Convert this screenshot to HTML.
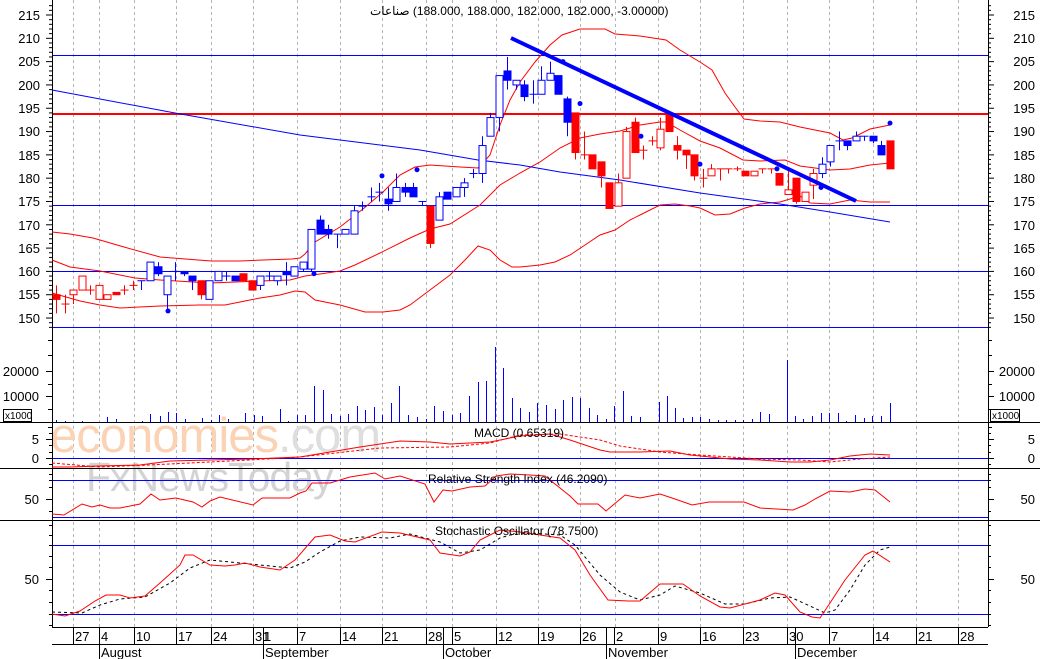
<!DOCTYPE html>
<html><head><meta charset="utf-8"><style>
html,body{margin:0;padding:0;background:#fff;}
svg{display:block;font-family:"Liberation Sans","Noto Sans CJK SC",sans-serif;}
</style></head><body>
<svg id="s" width="1040" height="659" viewBox="0 0 1040 659" xmlns="http://www.w3.org/2000/svg">
<rect width="1040" height="659" fill="#fff"/>
<g id="grid" stroke="#b4b4b4" stroke-dasharray="3,3" stroke-width="1"></g>
<!-- watermark -->
<text x="50" y="452" font-size="49" fill="#fbd3b4" letter-spacing="-1">economies<tspan fill="#dedede">.com</tspan></text>
<text x="86" y="491" font-size="41" fill="#cccccc" opacity="0.85" letter-spacing="-1">FxNewsToday</text>
<!-- horizontal lines price -->
<g stroke-width="1">
<line x1="52" y1="55.5" x2="988" y2="55.5" stroke="#00f"/>
<line x1="52" y1="205.5" x2="988" y2="205.5" stroke="#00f"/>
<line x1="52" y1="271.5" x2="988" y2="271.5" stroke="#00f"/>
<line x1="52" y1="327.5" x2="988" y2="327.5" stroke="#00f"/>
<line x1="52" y1="114" x2="988" y2="114" stroke="#f00" stroke-width="2"/>
<line x1="52" y1="458.5" x2="988" y2="458.5" stroke="#00f"/>
<line x1="52" y1="480.5" x2="988" y2="480.5" stroke="#00f"/>
<line x1="52" y1="517.5" x2="988" y2="517.5" stroke="#00f"/>
<line x1="52" y1="545.5" x2="988" y2="545.5" stroke="#00f"/>
<line x1="52" y1="614.5" x2="988" y2="614.5" stroke="#00f"/>
<line x1="0" y1="422.5" x2="1040" y2="422.5" stroke="#000"/>
<line x1="0" y1="468.5" x2="1040" y2="468.5" stroke="#000"/>
<line x1="0" y1="520.5" x2="1040" y2="520.5" stroke="#000"/>
<line x1="52.5" y1="0" x2="52.5" y2="627" stroke="#000"/>
<line x1="988.5" y1="0" x2="988.5" y2="627" stroke="#000"/>
<line x1="52" y1="627.5" x2="988" y2="627.5" stroke="#000"/>
<line x1="52" y1="644.5" x2="988" y2="644.5" stroke="#000"/>
</g>
<g id="ticks" stroke="#000" stroke-width="1"></g>
<g id="draw"></g>
<!-- titles -->
<text x="370" y="15" font-size="12" fill="#000" direction="ltr">&#x200E;صناعات&#x200E; (188.000, 188.000, 182.000, 182.000, -3.00000)</text>
<text x="474" y="437" font-size="12" fill="#000">MACD (0.65319)</text>
<text x="428" y="483" font-size="12" fill="#000">Relative Strength Index (46.2090)</text>
<text x="435" y="535" font-size="12" fill="#000">Stochastic Oscillator (78.7500)</text>
<!-- left axis labels -->
<g font-size="13" fill="#000" text-anchor="end">
<text x="40" y="20">215</text><text x="40" y="43">210</text><text x="40" y="66">205</text><text x="40" y="90">200</text><text x="40" y="113">195</text><text x="40" y="136">190</text><text x="40" y="160">185</text><text x="40" y="183">180</text><text x="40" y="206">175</text><text x="40" y="230">170</text><text x="40" y="253">165</text><text x="40" y="276">160</text><text x="40" y="299">155</text><text x="40" y="323">150</text>
<text x="39" y="376">20000</text><text x="39" y="401">10000</text>
<text x="39" y="444">5</text><text x="39" y="463">0</text>
<text x="39" y="504">50</text><text x="39" y="584">50</text>
</g>
<g font-size="13" fill="#000" text-anchor="end">
<text x="1035" y="20">215</text><text x="1035" y="43">210</text><text x="1035" y="66">205</text><text x="1035" y="90">200</text><text x="1035" y="113">195</text><text x="1035" y="136">190</text><text x="1035" y="160">185</text><text x="1035" y="183">180</text><text x="1035" y="206">175</text><text x="1035" y="230">170</text><text x="1035" y="253">165</text><text x="1035" y="276">160</text><text x="1035" y="299">155</text><text x="1035" y="323">150</text>
<text x="1035" y="376">20000</text><text x="1035" y="401">10000</text>
<text x="1035" y="444">5</text><text x="1035" y="463">0</text>
<text x="1035" y="504">50</text><text x="1035" y="584">50</text>
</g>
<rect x="3.5" y="409.5" width="28" height="12" fill="none" stroke="#000"/>
<text x="5" y="419" font-size="10">x1000</text>
<rect x="990.5" y="409.5" width="29" height="12" fill="none" stroke="#000"/>
<text x="992" y="419" font-size="10">x1000</text>
<!-- dates -->
<g font-size="13" fill="#000">
<text x="75" y="641">27</text><text x="101" y="641">4</text><text x="136" y="641">10</text><text x="178" y="641">17</text><text x="213" y="641">24</text><text x="255" y="641">31</text><text x="264" y="641">1</text><text x="299" y="641">7</text><text x="342" y="641">14</text><text x="384" y="641">21</text><text x="428" y="641">28</text><text x="454" y="641">5</text><text x="498" y="641">12</text><text x="540" y="641">19</text><text x="582" y="641">26</text><text x="616" y="641">2</text><text x="660" y="641">9</text><text x="702" y="641">16</text><text x="745" y="641">23</text><text x="789" y="641">30</text><text x="831" y="641">7</text><text x="875" y="641">14</text><text x="918" y="641">21</text><text x="960" y="641">28</text>
<text x="101" y="657">August</text><text x="265" y="657">September</text><text x="445" y="657">October</text><text x="608" y="657">November</text><text x="797" y="657">December</text>
</g>
<g stroke="#000" stroke-width="1">
<line x1="73.5" y1="627" x2="73.5" y2="644"/><line x1="99.5" y1="627" x2="99.5" y2="659"/><line x1="134.5" y1="627" x2="134.5" y2="644"/><line x1="176.5" y1="627" x2="176.5" y2="644"/><line x1="211.5" y1="627" x2="211.5" y2="644"/><line x1="253.5" y1="627" x2="253.5" y2="644"/><line x1="263.5" y1="627" x2="263.5" y2="659"/><line x1="297.5" y1="627" x2="297.5" y2="644"/><line x1="340.5" y1="627" x2="340.5" y2="644"/><line x1="382.5" y1="627" x2="382.5" y2="644"/><line x1="426.5" y1="627" x2="426.5" y2="644"/><line x1="443.5" y1="627" x2="443.5" y2="659"/><line x1="452.5" y1="627" x2="452.5" y2="644"/><line x1="496.5" y1="627" x2="496.5" y2="644"/><line x1="538.5" y1="627" x2="538.5" y2="644"/><line x1="580.5" y1="627" x2="580.5" y2="644"/><line x1="606.5" y1="627" x2="606.5" y2="659"/><line x1="614.5" y1="627" x2="614.5" y2="644"/><line x1="658.5" y1="627" x2="658.5" y2="644"/><line x1="700.5" y1="627" x2="700.5" y2="644"/><line x1="743.5" y1="627" x2="743.5" y2="644"/><line x1="787.5" y1="627" x2="787.5" y2="644"/><line x1="795.5" y1="627" x2="795.5" y2="659"/><line x1="829.5" y1="627" x2="829.5" y2="644"/><line x1="873.5" y1="627" x2="873.5" y2="644"/><line x1="916.5" y1="627" x2="916.5" y2="644"/><line x1="958.5" y1="627" x2="958.5" y2="644"/>
</g>
</svg>
<script>
var NS="http://www.w3.org/2000/svg";
function el(p,t,a){var e=document.createElementNS(NS,t);for(var k in a)e.setAttribute(k,a[k]);p.appendChild(e);return e;}
var g=document.getElementById('grid'),d=document.getElementById('draw'),tk=document.getElementById('ticks');
[73,99,134,176,211,253,297,340,382,426,452,496,538,580,615,658,700,743,787,829,873,916,958].forEach(function(x){el(g,'line',{x1:x+.5,y1:0,x2:x+.5,y2:627});});
for(var p=148;p<=217;p++){var y=15+(215-p)*4.662;var L=(p%5==0)?6:3;el(tk,'line',{x1:52-L,y1:y,x2:52,y2:y});el(tk,'line',{x1:988,y1:y,x2:988+L,y2:y});}
[[340,4],[355,4],[371,6],[384,4],[396,6],[409,4],[427,4],[433,3],[439,6],[445,3],[452,3],[458,6],[464,3],[474,3],[480,3],[487,3],[499,6],[511,3],[525,3],[535,3],[545,3],[556,3],[567,3],[579,6],[590,3],[602,3],[614,3],[625,3]].forEach(function(a){el(tk,'line',{x1:52-a[1],y1:a[0]+.5,x2:52,y2:a[0]+.5});el(tk,'line',{x1:988,y1:a[0]+.5,x2:988+a[1],y2:a[0]+.5});});
function Y(p){return 15+(215-p)*4.662;}
function pl(pts,c,w,da){var s=pts.map(function(q){return q[0]+','+q[1];}).join(' ');var a={points:s,fill:'none',stroke:c,'stroke-width':w||1};if(da)a['stroke-dasharray']=da;el(d,'polyline',a);}
pl([[52,232],[70,234],[93,238],[124,247],[160,257],[211,261],[240,261],[263,260],[292,259],[300,258],[305,254],[315,242],[340,227],[363,209],[383,192],[400,175],[415,167],[430,165],[460,167],[478,168],[490,155],[500,125],[510,100],[520,82],[535,62],[550,45],[562,35],[580,29],[605,29],[615,34],[640,36],[666,40],[680,50],[700,62],[712,70],[725,93],[735,107],[744,119],[760,121],[780,122],[800,127],[830,133],[843,140],[852,138],[870,129],[890,125]],'#f00');
pl([[52,260],[70,267],[100,271],[135,278],[160,280],[210,283],[260,281],[290,280],[305,276],[320,274],[340,271],[355,265],[380,253],[410,238],[430,229],[450,224],[480,205],[500,185],[520,173],[540,162],[560,148],[580,138],[600,134],[620,131],[640,125],[660,122],[666,122],[680,130],[700,141],[720,148],[743,160],[760,161],[785,160],[800,166],[830,170],[850,169],[870,165],[890,163]],'#f00');
pl([[52,293],[80,301],[100,305],[120,308],[160,306],[200,305],[225,305],[245,301],[260,298],[280,295],[295,291],[305,292],[315,300],[340,305],[365,312],[383,312],[400,310],[410,305],[430,290],[450,275],[465,260],[478,246],[490,250],[500,260],[512,267],[520,267],[540,265],[555,262],[570,255],[585,245],[600,235],[615,230],[630,220],[640,215],[660,205],[675,204],[690,206],[700,208],[715,215],[730,214],[745,208],[760,204],[780,202],[790,199],[800,196],[810,203],[830,204],[850,200],[870,202],[890,202]],'#f00');
pl([[52,90],[175,113],[300,135],[420,150],[478,160],[520,165],[560,172],[620,180],[700,193],[780,204],[830,212],[890,222]],'#00f');
var C=[['r',154,157,151,155,1],['r',153,155,151,153,0],['r',156,156,153,155,2],['r',156,159,156,159,2],['r',156,157,155,156,0],['r',157,157,154,154,2],['r',154,155,154,155,2],['r',155.5,155.5,155,155,1],['r',156,157,155,156,0],['r',157,158,156,157,0],
['b',158,158,156,158,0],['b',158,162,158,162,2],['b',161,162,159,159.5,1],['b',155,159,152,159,2],['b',160,162,158,160,0],['b',160,160,159,159.5,1],['b',159,159,156,158,1],['r',158,158,154,155,1],['b',154,158,154,158,2],['b',158,160,158,160,2],
['b',159,160,158,159,0],['b',159,159,158,158,1],['r',159.5,159.5,158,158,1],['r',158,158,156,156,1],['b',157,159,156,159,2],['b',159,160,158,159,0],['b',158,159,157,159,2],['b',160,162,157,159.3,1],['b',159,161,159,161,2],['b',160.5,162,160,162,2],
['b',160.5,169,160,169,2],['b',171,172,168,168,1],['b',169,170,167,168,1],['b',168,168,165,168,0],['b',168,169,168,169,2],['b',168,174,168,173,2],['b',174,175,173,174,0],['b',176,178,175,176,0],['b',177,179,175,177,0],['b',175.5,178,173,174.5,1],
['b',175,181,175,178,2],['b',178,179,176,177,1],['b',178,179,176,176,1],['b',175,175,174,175,0],['r',174,174,165,166,1],['b',171,177,171,176,2],['b',177,177,175.5,175.5,1],['b',176,178,176,178,2],['b',178,180,176,179,2],['b',181,182,180,181,0],
['b',181,189,179,187,2],['b',189,194,189,193,2],['b',193,202,190,202,2],['b',203,206,199,201,1],['b',200,201,199,201,2],['b',200,201,196.5,197.5,1],['b',198,201,196,198,0],['b',198,204,198,201,2],['b',201,205,201,202.5,2],['b',202,202,198,198,1],
['b',197,197.5,189,192,1],['r',194,194,184,185.5,1],['r',185,190,184,185,0],['r',185,185,182,182,1],['r',183.5,183.5,178,180.5,1],['r',179,179,173.5,173.5,1],['r',174,181,174,179,2],['r',180,191,180,190,2],['r',192,193,185.5,185.5,1],['r',186,187,184,186,0],
['r',188,189,187,188,0],['r',186.5,193,186,190.5,2],['r',194,194,190,190,1],['r',187,189,184,186,1],['r',186,186,182,185,1],['r',185,185,179.5,180.5,1],['r',180,182,178,180,0],['r',180.5,183,180.5,182,2],['r',182,182,179.5,182,0],['r',182,182,181,182,0],
['r',182,182.5,181.5,182,0],['r',181.5,181.5,180.5,180.5,1],['r',180.5,181.5,180.5,181.5,2],['r',182,182,181,182,0],['r',182,182,181,182,0],['r',181,181,178.5,178.5,1],['r',176.5,182,176.5,177.5,2],['r',180,180,174.5,175,1],['r',175,177,175,177,2],['r',178.5,182,175.5,181,2],
['b',181,184.5,180,183,2],['b',183.5,187,182.5,187,2],['b',188,190,186,188,0],['b',188,188,186,187,1],['b',188,190,188,189,2],['b',189,189,188,189,0],['b',189,189,187.5,188,1],['b',187,188,185,185,1],['r',188,188,182,182,1]];
C.forEach(function(c,i){var x=Math.round(56+i*8.51)+.5;var col=c[0]=='r'?'#f00':'#00f';var o=c[1],h=c[2],l=c[3],cl=c[4],t=c[5];
el(d,'line',{x1:x,y1:Y(h),x2:x,y2:Y(l),stroke:col});
if(t==0){el(d,'line',{x1:x-4,y1:Y(o),x2:x+4,y2:Y(o),stroke:col});}
else{var a=Math.min(Y(o),Y(cl)),b=Math.max(Y(o),Y(cl));if(b-a<2){b=a+3;}
el(d,'rect',{x:x-3.5,y:a,width:7,height:b-a,fill:t==1?col:'#fff',stroke:col});}});
[[168,151.5],[314,159.5],[382,180.5],[417,181.8],[580,196],[641,189],[700,183],[777,182],[821,178],[890,191.8],[563,205]].forEach(function(p){el(d,'circle',{cx:p[0],cy:Y(p[1]),r:2.5,fill:'#00f'});});
el(d,'line',{x1:511,y1:38,x2:856,y2:201,stroke:'#00f','stroke-width':4});
var V=[[56,2],[65,1],[82,1],[107,5],[116,3],[142,1],[150,8],[160,6],[168,10],[176,9],[185,3],[202,4],[211,2],[219,7],[228,3],[245,9],[254,7],[262,6],[280,13],[288,1],[297,7],[305,7],[314,36],[323,32],[331,8],[340,6],[348,8],[357,16],[365,12],[374,15],[382,7],[391,19],[399,36],[408,7],[417,5],[426,3],[434,16],[443,11],[452,7],[460,9],[469,26],[478,40],[486,41],[495,75],[503,54],[512,24],[520,14],[529,10],[537,19],[546,17],[555,13],[563,22],[572,25],[580,24],[589,14],[597,7],[606,3],[614,16],[623,31],[631,6],[640,5],[659,20],[667,26],[675,14],[683,4],[692,5],[700,5],[709,3],[718,2],[726,2],[735,2],[743,2],[752,3],[760,10],[769,8],[787,62],[795,6],[803,3],[812,6],[821,9],[829,9],[838,9],[846,1],[855,7],[864,4],[872,6],[881,6],[890,19]];
V.forEach(function(v){el(d,'line',{x1:v[0]+.5,y1:422,x2:v[0]+.5,y2:422-v[1],stroke:'#00f'});});
pl([[52,467],[70,467],[100,466],[140,465],[170,461],[250,459],[300,457],[330,452],[360,447],[380,444],[400,441],[430,442],[450,444],[490,442],[520,436],[550,434],[570,440],[600,450],[610,452],[640,452],[670,451],[690,455],[710,457],[730,459],[760,460],[790,462],[810,462],[830,460],[850,456],[870,454],[890,455]],'#f00');
pl([[52,463],[100,467],[150,465],[250,460],[300,457],[380,448],[450,447],[490,443],[520,435],[560,434],[600,440],[620,446],[660,452],[700,455],[760,459],[800,460],[830,462],[860,459],[890,457]],'#f00',1,'3,2');
pl([[52,514],[64,515],[82,504],[92,507],[100,505],[110,508],[120,508],[140,504],[151,494],[160,500],[176,498],[193,502],[202,507],[210,501],[220,497],[253,505],[262,498],[290,498],[300,493],[306,491],[312,483],[330,483],[340,480],[350,477],[375,473],[385,479],[400,476],[425,484],[434,502],[443,490],[452,491],[470,487],[485,486],[496,476],[510,474],[530,475],[545,476],[570,496],[578,504],[598,504],[606,511],[625,495],[640,498],[660,494],[675,499],[692,505],[709,502],[744,502],[760,508],[793,510],[805,505],[815,499],[830,491],[850,492],[865,489],[875,490],[890,502]],'#f00');
pl([[52,612],[82,613],[100,605],[120,599],[145,597],[170,583],[190,568],[210,560],[230,562],[260,565],[290,568],[305,562],[320,552],[340,541],[360,537],[390,538],[410,534],[440,542],[460,553],[480,550],[500,538],[510,535],[530,533],[560,535],[575,545],[600,575],[620,592],[640,600],[660,595],[675,586],[700,593],[725,604],[745,604],[770,598],[790,597],[810,606],[825,613],[835,610],[850,590],[865,565],[880,550],[890,547]],'#000',1,'3,3');
pl([[52,614],[65,616],[80,611],[95,601],[106,595],[120,595],[130,598],[145,596],[160,583],[180,565],[185,555],[193,555],[210,565],[225,566],[235,565],[245,563],[260,567],[280,570],[295,560],[315,537],[330,535],[345,541],[355,542],[382,532],[400,533],[430,540],[440,553],[460,556],[470,552],[480,540],[500,530],[520,532],[560,538],[575,550],[590,575],[608,600],[628,601],[640,601],[660,584],[683,584],[700,596],[720,607],[730,608],[760,600],[775,593],[785,595],[800,612],[812,617],[820,618],[830,603],[845,580],[865,555],[873,551],[890,562]],'#f00');
</script>
</body></html>
